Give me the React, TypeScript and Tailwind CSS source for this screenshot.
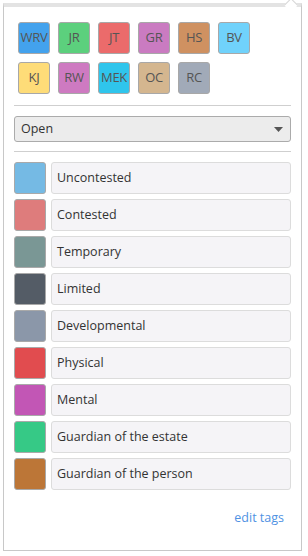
import React from 'react';

const people = [
  { id: 'WRV', color: 'bg-[#43a2ed]' },
  { id: 'JR', color: 'bg-[#5cd07d]' },
  { id: 'JT', color: 'bg-[#eb6b6b]' },
  { id: 'GR', color: 'bg-[#ca7bc1]' },
  { id: 'HS', color: 'bg-[#cf9161]' },
  { id: 'BV', color: 'bg-[#70d2fb]' },
  { id: 'KJ', color: 'bg-[#fedc78]' },
  { id: 'RW', color: 'bg-[#ce7ac1]' },
  { id: 'MEK', color: 'bg-[#2fc5ec]' },
  { id: 'OC', color: 'bg-[#d4b68f]' },
  { id: 'RC', color: 'bg-[#a1aab8]' },
];

const tags = [
  { label: 'Uncontested', color: 'bg-[#75bae4]' },
  { label: 'Contested', color: 'bg-[#de7c7c]' },
  { label: 'Temporary', color: 'bg-[#7a9795]' },
  { label: 'Limited', color: 'bg-[#545c66]' },
  { label: 'Developmental', color: 'bg-[#8b97a9]' },
  { label: 'Physical', color: 'bg-[#e14c4f]' },
  { label: 'Mental', color: 'bg-[#c256b5]' },
  { label: 'Guardian of the estate', color: 'bg-[#36c986]' },
  { label: 'Guardian of the person', color: 'bg-[#bc7637]' },
];

const TagRow: React.FC<{ label: string; color: string }> = ({ label, color }) => (
  <div className="flex gap-[5px] h-[32px]">
    <div className={`w-[32px] h-[32px] shrink-0 rounded-[3px] border border-[#a9a9a9] ${color}`} />
    <div className="flex-1 flex items-center px-[5px] bg-[#f5f4f7] border border-[#dcdcdc] rounded-[3px] text-[12.5px] text-[#333]">
      {label}
    </div>
  </div>
);

export default function App() {
  return (
    <div className="w-[308px] h-[556px] bg-white pt-[3px] pl-[3px]" style={{ fontFamily: '"Open Sans", "Noto Sans", sans-serif' }}>
      <div className="relative w-[299px] border-x border-b border-[#c8c8c8] border-t-[4px] border-t-[#e3e3e3] bg-white px-[10px] pt-[15px] pb-[24px]">
        <div className="absolute -top-[7px] right-[5px] w-[10px] h-[10px] rotate-45 bg-white border-l border-t border-[#d6d6d6]" />
        <div className="w-[248px] pl-[4px] flex flex-wrap gap-2">
          {people.map((p) => (
            <div
              key={p.id}
              className={`w-[32px] h-[32px] rounded-[3px] border border-[#a8a8a8] flex items-center justify-center text-[13px] tracking-[-0.3px] text-[#555] ${p.color}`}
            >
              {p.id}
            </div>
          ))}
        </div>
        <div className="mt-[11px] border-t border-[#cfcfcf]" />
        <div className="mt-[10px] h-[26px] flex items-center justify-between px-[6px] bg-[#ececec] border border-[#ababab] rounded-[3px] text-[12.5px] text-[#333]">
          <span>Open</span>
          <svg width="9" height="5" viewBox="0 0 9 5" className="mr-[1px]">
            <path d="M0 0 H9 L4.5 5 Z" fill="#555" />
          </svg>
        </div>
        <div className="mt-[9px] border-t border-[#cfcfcf]" />
        <div className="mt-[10px] flex flex-col gap-[5px]">
          {tags.map((t) => (
            <TagRow key={t.label} label={t.label} color={t.color} />
          ))}
        </div>
        <div className="mt-[20px] flex justify-end pr-[7px]">
          <a className="text-[12.5px] text-[#4f92e3] leading-[16px]">edit tags</a>
        </div>
      </div>
    </div>
  );
}
